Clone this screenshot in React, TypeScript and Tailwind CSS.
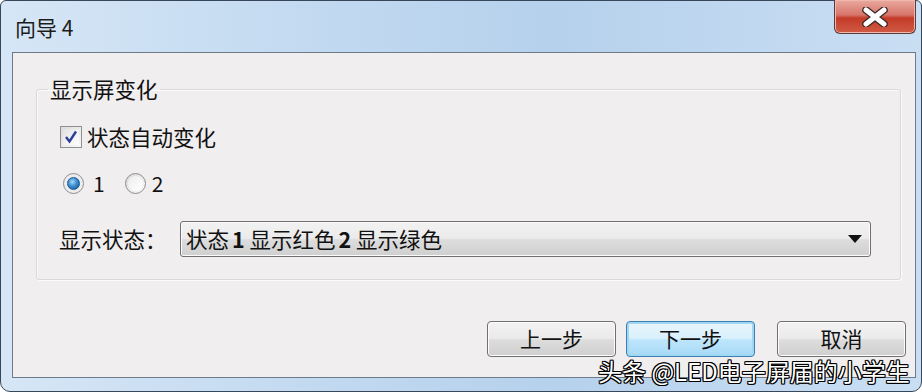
import React from "react";

const font = "font-['Noto_Sans_CJK_SC','Noto_Sans',sans-serif]";

function CloseX() {
  return (
    <svg width="26" height="20" viewBox="0 0 26 20">
      <path d="M4 3 L22 17 M22 3 L4 17" stroke="#3a2a28" strokeWidth="7.5" strokeLinecap="round" />
      <path d="M4 3 L22 17 M22 3 L4 17" stroke="#ffffff" strokeWidth="5" strokeLinecap="round" />
    </svg>
  );
}

function Btn({ label, focused }: { label: string; focused?: boolean }) {
  return (
    <div
      className={
        focused
          ? "w-[129px] h-[36px] rounded-[4px] border border-[#3c7fb1] shadow-[inset_0_0_0_2px_#9fd7f5] bg-[linear-gradient(to_bottom,#eaf6fd_0%,#d9f0fc_48%,#bee6fd_52%,#a7d9f5_100%)] flex items-center justify-center text-[21px] text-[#111]"
          : "w-[129px] h-[36px] rounded-[4px] border border-[#707070] shadow-[inset_0_0_0_1px_#fcfcfc] bg-[linear-gradient(to_bottom,#f2f2f2_0%,#ebebeb_48%,#dddddd_52%,#cfcfcf_100%)] flex items-center justify-center text-[21px] text-[#111]"
      }
    >
      {label}
    </div>
  );
}

export default function App() {
  return (
    <div className={`w-[922px] h-[392px] bg-white overflow-hidden ${font}`}>
      <div className="relative w-[922px] h-[392px] rounded-t-[6px] rounded-b-[10px] border border-[#37475a] bg-[linear-gradient(to_right,#d6e6f6_0%,#c4dbf1_30%,#b6d1ec_60%,#c9def3_100%)] flex flex-col">
        {/* title bar */}
        <div className="h-[51px] flex items-start justify-between pl-[14px] pr-[5px]">
          <div className="pt-[11px] text-[21px] leading-[30px] text-[#1c1c1c]">向导 4</div>
          <div className="w-[82px] h-[34px] -mt-[1px] rounded-b-[6px] border border-t-0 border-[#5b3a37] bg-[linear-gradient(to_bottom,#e9aa9f_0%,#d7756a_45%,#c33b28_55%,#d15b45_100%)] shadow-[inset_0_0_0_1px_#f0b8ae] flex items-center justify-center">
            <CloseX />
          </div>
        </div>
        {/* client */}
        <div className="flex-1 ml-[11px] mr-[5px] mb-[13px] border border-[#6d7b8a] bg-[#f0eeef] flex flex-col">
          <fieldset className="mt-[23px] ml-[23px] mr-[14px] h-[204px] border border-[#d9d9d9] rounded-[3px] shadow-[inset_1px_1px_0_#fbfbfb,1px_1px_0_#fbfbfb] px-[23px] pt-0">
            <legend className="ml-[-12px] px-[2px] text-[21.5px] leading-[26px] text-[#111]">显示屏变化</legend>
            <div className="mt-[21px] flex items-center gap-[5px]">
              <div className="w-[22px] h-[22px] border border-[#8e8f8f] bg-[linear-gradient(135deg,#dcdcdc,#f8f8f8)] flex items-center justify-center">
                <div className="w-[16px] h-[16px] bg-[linear-gradient(135deg,#e2e2e2,#ffffff)] flex items-center justify-center">
                  <svg width="14" height="14" viewBox="0 0 14 14">
                    <path d="M2 7 L5.5 11.5 L12 1.5" fill="none" stroke="#2c3e9a" strokeWidth="2.4" />
                  </svg>
                </div>
              </div>
              <span className="text-[21.5px] leading-[28px] text-[#111]">状态自动变化</span>
            </div>
            <div className="mt-[19px] flex items-center">
              <div className="ml-[3px] w-[21px] h-[21px] rounded-full border border-[#8e8f8f] bg-[#ececec] flex items-center justify-center">
                <div className="w-[13px] h-[13px] rounded-full bg-[radial-gradient(circle_at_40%_35%,#a8d8f8_0%,#3b8ed0_45%,#0d4d8c_100%)] border border-[#1b5a96]" />
              </div>
              <span className="ml-[9px] text-[21px] leading-[26px] text-[#111]">1</span>
              <div className="ml-[20px] w-[21px] h-[21px] rounded-full border border-[#8e8f8f] bg-[linear-gradient(135deg,#d8d8d8,#fafafa)] flex items-center justify-center">
                <div className="w-[15px] h-[15px] rounded-full bg-[linear-gradient(135deg,#eeeeee,#ffffff)]" />
              </div>
              <span className="ml-[6px] text-[21px] leading-[26px] text-[#111]">2</span>
            </div>
            <div className="mt-[25px] flex items-center">
              <span className="w-[121px] text-[21.5px] leading-[28px] text-[#111] -ml-[1px]">显示状态：</span>
              <div className="w-[691px] h-[36px] rounded-[3px] border border-[#707070] bg-[linear-gradient(to_bottom,#f2f2f2_0%,#ebebeb_48%,#dddddd_52%,#cfcfcf_100%)] shadow-[inset_0_0_0_1px_#fbfbfb] flex items-center justify-between pl-[5px] pr-[8px]">
                <span className="text-[21.5px] leading-[28px] text-[#111]">
                  状态<b className="font-bold ml-[3px]">1</b> 显示红色<b className="font-bold ml-[3px]">2</b> 显示绿色
                </span>
                <svg width="14" height="8" viewBox="0 0 14 8">
                  <path d="M0 0 L14 0 L7 8 Z" fill="#111" />
                </svg>
              </div>
            </div>
          </fieldset>
          <div className="mt-[41px] flex justify-end gap-[10px] pr-[9px]">
            <Btn label="上一步" />
            <Btn label="下一步" focused />
            <div className="ml-[12px]">
              <Btn label="取消" />
            </div>
          </div>
        </div>
        <div className="absolute left-[597px] top-[353px] text-[24px] leading-[34px] text-white [text-shadow:-1px_-1px_0_#000,1px_-1px_0_#000,-1px_1px_0_#000,1px_1px_0_#000,0_1px_0_#000,0_-1px_0_#000,1px_0_0_#000,-1px_0_0_#000]">
          头条 @LED电子屏届的小学生
        </div>
      </div>
    </div>
  );
}
